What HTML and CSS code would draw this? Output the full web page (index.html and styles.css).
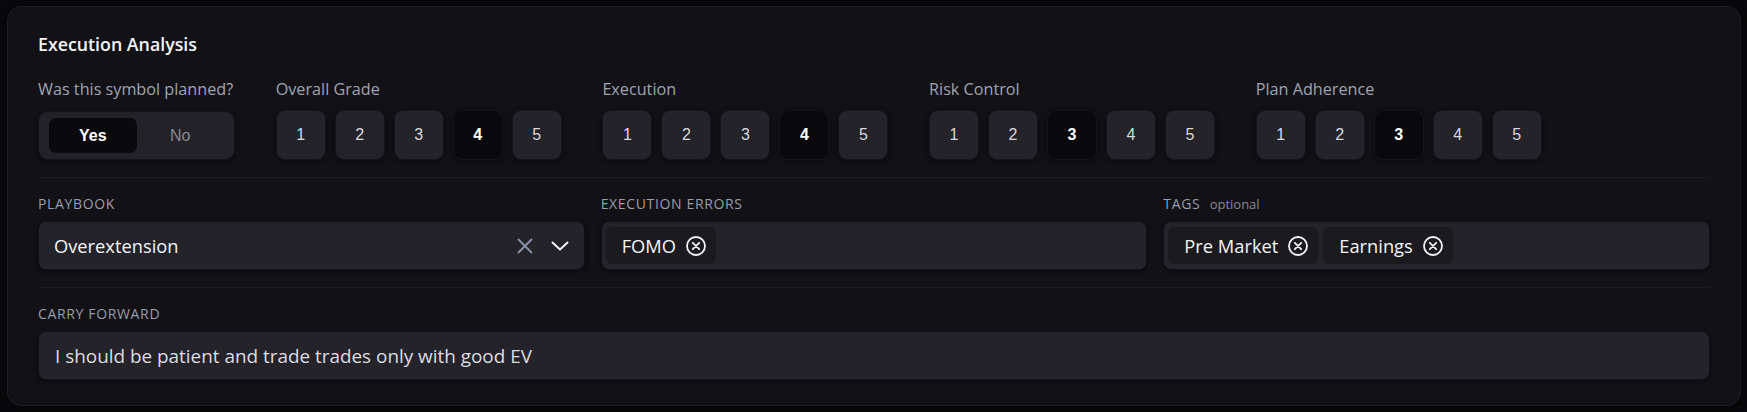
FILE: index.html
```html
<!DOCTYPE html>
<html lang="en">
<head>
<meta charset="utf-8">
<title>Execution Analysis</title>
<link rel="stylesheet" href="styles.css">
</head>
<body>
<section class="card">
  <h2 class="card-title">Execution Analysis</h2>

  <div class="ratings">
    <div class="group">
      <div class="group-label">Was this symbol planned?</div>
      <div class="toggle">
        <button class="toggle-btn is-on">Yes</button>
        <button class="toggle-btn">No</button>
      </div>
    </div>
    <div class="group">
      <div class="group-label">Overall Grade</div>
      <div class="grades">
        <button class="grade">1</button><button class="grade">2</button><button class="grade">3</button><button class="grade is-on">4</button><button class="grade">5</button>
      </div>
    </div>
    <div class="group">
      <div class="group-label">Execution</div>
      <div class="grades">
        <button class="grade">1</button><button class="grade">2</button><button class="grade">3</button><button class="grade is-on">4</button><button class="grade">5</button>
      </div>
    </div>
    <div class="group">
      <div class="group-label">Risk Control</div>
      <div class="grades">
        <button class="grade">1</button><button class="grade">2</button><button class="grade is-on">3</button><button class="grade">4</button><button class="grade">5</button>
      </div>
    </div>
    <div class="group">
      <div class="group-label">Plan Adherence</div>
      <div class="grades">
        <button class="grade">1</button><button class="grade">2</button><button class="grade is-on">3</button><button class="grade">4</button><button class="grade">5</button>
      </div>
    </div>
  </div>

  <div class="section fields">
    <div class="field">
      <div class="field-label">Playbook</div>
      <div class="box select">
        <span class="select-value">Overextension</span>
        <span class="select-icons">
          <svg class="ico-clear" width="16" height="16" viewBox="0 0 16 16"><path d="M1.5 1.5 L14.5 14.5 M14.5 1.5 L1.5 14.5" stroke="#8a93a8" stroke-width="1.8" fill="none" stroke-linecap="round"/></svg>
          <svg class="ico-chev" width="18" height="10" viewBox="0 0 18 10"><path d="M1.5 1.5 L9 8.5 L16.5 1.5" stroke="#f2f2f4" stroke-width="2" fill="none" stroke-linecap="round" stroke-linejoin="round"/></svg>
        </span>
      </div>
    </div>
    <div class="field">
      <div class="field-label">Execution Errors</div>
      <div class="box chips">
        <span class="chip">FOMO<svg class="chip-x" width="20" height="20" viewBox="0 0 20 20"><circle cx="10" cy="10" r="9" stroke="#f2f2f4" stroke-width="1.8" fill="none"/><path d="M6.8 6.8 L13.2 13.2 M13.2 6.8 L6.8 13.2" stroke="#f2f2f4" stroke-width="1.8" stroke-linecap="round"/></svg></span>
      </div>
    </div>
    <div class="field">
      <div class="field-label">Tags <span class="optional">optional</span></div>
      <div class="box chips">
        <span class="chip">Pre Market<svg class="chip-x" width="20" height="20" viewBox="0 0 20 20"><circle cx="10" cy="10" r="9" stroke="#f2f2f4" stroke-width="1.8" fill="none"/><path d="M6.8 6.8 L13.2 13.2 M13.2 6.8 L6.8 13.2" stroke="#f2f2f4" stroke-width="1.8" stroke-linecap="round"/></svg></span>
        <span class="chip">Earnings<svg class="chip-x" width="20" height="20" viewBox="0 0 20 20"><circle cx="10" cy="10" r="9" stroke="#f2f2f4" stroke-width="1.8" fill="none"/><path d="M6.8 6.8 L13.2 13.2 M13.2 6.8 L6.8 13.2" stroke="#f2f2f4" stroke-width="1.8" stroke-linecap="round"/></svg></span>
      </div>
    </div>
  </div>

  <div class="section">
    <div class="field">
      <div class="field-label">Carry Forward</div>
      <div class="box text-input">I should be patient and trade trades only with good EV</div>
    </div>
  </div>
</section>
</body>
</html>
```

FILE: styles.css
```css
* { box-sizing: border-box; }

html, body {
  margin: 0;
  background: #09090b;
}

body {
  font-family: "Open Sans", "Noto Sans", sans-serif;
  color: #e6e6ea;
  height: 412px;
  overflow: hidden;
}

.card {
  margin: 6px 6px 0 7px;
  background: #111116;
  border: 1px solid #1d1d24;
  border-radius: 14px;
  padding: 25px 30px 25px 30px;
  box-shadow: 0 2px 10px rgba(0, 0, 0, 0.5);
}

.card-title {
  margin: 0 0 22px;
  font-size: 17.8px;
  line-height: 24px;
  font-weight: 600;
  color: #f4f4f6;
}

.ratings {
  display: flex;
  gap: 40.7px;
  align-items: flex-start;
}

.group {
  display: flex;
  flex-direction: column;
  gap: 10px;
}

.group-label {
  font-size: 16.2px;
  line-height: 22px;
  color: #a0a4b0;
  white-space: nowrap;
}

.toggle {
  display: flex;
  width: 197px;
  height: 49px;
  padding: 6px 10px;
  margin-top: 1px;
  background: #222228;
  border: 1px solid #12141e;
  border-radius: 10px;
  box-shadow: 0 1px 4px rgba(0, 0, 0, 0.45);
}

.toggle-btn {
  flex: 1;
  border: 0;
  background: transparent;
  border-radius: 7px;
  font-family: "Liberation Sans", Arial, sans-serif;
  font-size: 16px;
  color: #8a8a92;
  padding: 0;
}

.toggle-btn.is-on {
  background: #0a0a0d;
  color: #ffffff;
  font-weight: 700;
}

.grades {
  display: flex;
  gap: 9px;
}

.grade {
  width: 50px;
  height: 50px;
  padding: 0;
  background: #232329;
  border: 1px solid #14161f;
  border-radius: 9px;
  font-family: "Liberation Sans", Arial, sans-serif;
  font-size: 16px;
  color: #d8d8de;
  box-shadow: 0 1px 5px rgba(0, 0, 0, 0.45);
}

.grade.is-on {
  background: #09090c;
  color: #ffffff;
  font-weight: 700;
}

.section {
  margin-top: 17px;
  padding-top: 16px;
  border-top: 1px solid #1b1b21;
}

.section + .section {
  margin-top: 17px;
}

.fields {
  display: grid;
  grid-template-columns: repeat(3, 1fr);
  gap: 16px;
}

.field {
  display: flex;
  flex-direction: column;
  gap: 7px;
}

.field-label {
  font-size: 14px;
  line-height: 20px;
  text-transform: uppercase;
  letter-spacing: 0.65px;
  color: #9a9eaa;
}

.optional {
  margin-left: 5px;
  text-transform: none;
  letter-spacing: 0;
  font-size: 13px;
  color: #868a96;
}

.box {
  height: 49px;
  background: #232329;
  border: 1px solid #10131e;
  border-radius: 8px;
  box-shadow: 0 1px 4px rgba(0, 0, 0, 0.45);
  font-size: 18.3px;
  color: #f4f4f6;
}

.select {
  display: flex;
  align-items: center;
  justify-content: space-between;
  padding: 0 15px;
}

.select-icons {
  display: flex;
  align-items: center;
  gap: 18px;
}

.chips {
  display: flex;
  align-items: center;
  gap: 5px;
  padding: 0 4px;
}

.chip {
  display: flex;
  align-items: center;
  gap: 10px;
  height: 37px;
  padding: 0 10px 0 16px;
  background: #1a1a1f;
  border-radius: 6px;
}

.chip-x {
  display: block;
}

.text-input {
  display: flex;
  align-items: center;
  padding: 0 16px;
  font-size: 18.9px;
  color: #dcdce0;
}
```
